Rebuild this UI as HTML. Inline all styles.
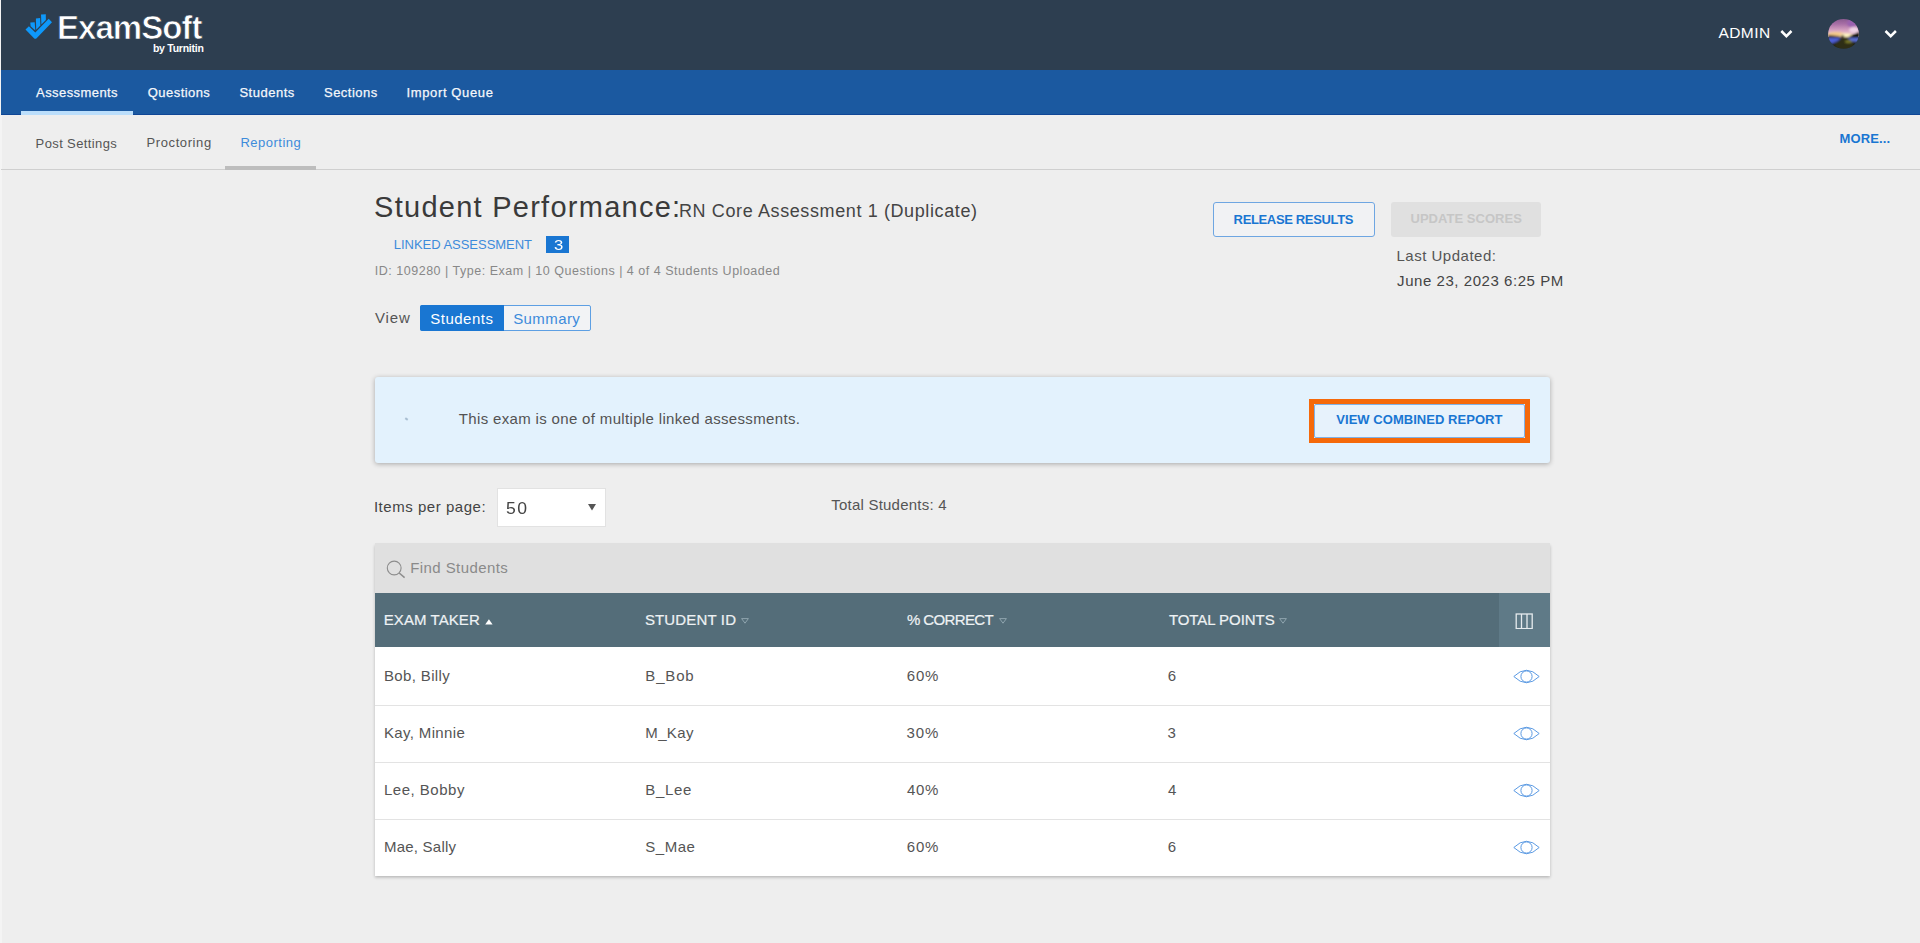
<!DOCTYPE html>
<html>
<head>
<meta charset="utf-8">
<title>Student Performance</title>
<style>
*{box-sizing:border-box;margin:0;padding:0}
html,body{width:1920px;height:943px;overflow:hidden;background:#eeeeee;font-family:"Liberation Sans",sans-serif;color:#444}
.abs{position:absolute;white-space:nowrap;line-height:1}
#top{position:absolute;left:1.4px;top:0;width:1919px;height:69.5px;background:#2d3e50}
#nav{position:absolute;left:1.4px;top:69px;width:1919px;height:46px;background:#1b59a0;border-bottom:1px solid #0f4696}
#navul{position:absolute;left:21px;top:111px;width:112px;height:4px;background:#bbdefb}
#subline{position:absolute;left:1.4px;top:169px;width:1919px;height:1px;background:#cfcfcf}
#repul{position:absolute;left:225px;top:166px;width:91px;height:4px;background:#bdbdbd}
.nv{color:#f4f7fb;font-size:13px;top:86px;-webkit-text-stroke:0.25px}
.sn{color:#555;font-size:13px;top:136px}
</style>
</head>
<body>
<div style="position:absolute;left:0;top:0;width:1.6px;height:943px;background:#f4f4f4"></div>
<div id="nav"></div>
<div id="top"></div>
<div id="navul"></div>
<div id="subline"></div>
<div id="repul"></div>

<!-- logo -->
<svg class="abs" style="left:24px;top:12px" width="30" height="28" viewBox="24 12 30 28">
 <path d="M25.5 29.6 L28.9 26.3 L35.3 32.4 L48.7 18.7 L52 22.2 L36.6 38.3 Q35.3 39.3 34 38.3 Z" fill="#0e98fa"/>
 <path d="M30.3 22.6 L34.7 22.2 L35.3 30.6 L30.6 26.3 Z" fill="#0e98fa"/>
 <path d="M35.9 18.5 L40.1 18.1 L40.4 25.6 L36.2 29.8 Z" fill="#0e98fa"/>
 <path d="M41 14.6 L45.8 14.2 L45.9 20 L41.4 24.5 Z" fill="#0e98fa"/>
</svg>
<div class="abs" id="lg1" style="left:56.9px;top:11px;font-size:33px;font-weight:bold;color:#fff;-webkit-text-stroke:0.7px #2d3e50;letter-spacing:-0.93px">ExamSoft</div>
<div class="abs" id="lg2" style="left:152.9px;top:42.6px;font-size:10.5px;font-weight:bold;color:#fff;letter-spacing:-0.25px">by Turnitin</div>

<!-- top right -->
<div class="abs" id="adm" style="left:1718.5px;top:25px;font-size:15.5px;color:#fff;letter-spacing:0.41px">ADMIN</div>
<svg class="abs" style="left:1779px;top:29px" width="15" height="11" viewBox="1779 29 15 11"><path d="M1781.3 31 L1786.4 36.2 L1791.5 31" fill="none" stroke="#fff" stroke-width="2.5"/></svg>
<svg class="abs" style="left:1883px;top:29px" width="15" height="11" viewBox="1883 29 15 11"><path d="M1885.5 31 L1890.7 36.2 L1895.9 31" fill="none" stroke="#fff" stroke-width="2.5"/></svg>
<svg class="abs" style="left:1826px;top:17px" width="36" height="34" viewBox="1826 17 36 34">
 <defs>
  <clipPath id="avc"><ellipse cx="1843.5" cy="33.9" rx="15.3" ry="14.9"/></clipPath>
  <linearGradient id="sky" x1="0" y1="0" x2="0" y2="1"><stop offset="0" stop-color="#7f5488"/><stop offset=".35" stop-color="#a86fa6"/><stop offset=".7" stop-color="#dba8c4"/><stop offset="1" stop-color="#f3d9c8"/></linearGradient>
  <filter id="bl" x="-20%" y="-20%" width="140%" height="140%"><feGaussianBlur stdDeviation="0.9"/></filter>
 </defs>
 <g clip-path="url(#avc)">
  <rect x="1826" y="17" width="36" height="20" fill="url(#sky)"/>
  <g filter="url(#bl)">
   <ellipse cx="1836" cy="35" rx="9" ry="3" fill="#f6c98a"/>
   <ellipse cx="1846" cy="35.5" rx="6" ry="2" fill="#fff3c0"/>
   <ellipse cx="1854" cy="30" rx="5" ry="3" fill="#f0d4e6"/>
   <ellipse cx="1852" cy="23" rx="5" ry="4" fill="#9a62b0"/>
   <rect x="1826" y="37" width="36" height="14" fill="#1c1b0c"/>
   <path d="M1828 37.3 L1841 37.3 L1838 41 L1832 43.5 L1828 42 Z" fill="#4d5fd6"/>
   <path d="M1847 37.5 L1860 37.5 L1860 42 L1852 41.5 Z" fill="#5a6fd8"/>
   <path d="M1842 38 L1846 38 L1855 44 L1850 49 L1838 49 L1833 44 Z" fill="#2e2e12"/>
   <ellipse cx="1848.5" cy="41.5" rx="3.5" ry="1.6" fill="#7a7a2a"/>
   <path d="M1828 35 L1840 36.3 L1840 37.6 L1828 37.6 Z" fill="#2a2418"/>
   <path d="M1849 36.6 L1859.5 31.5 L1860 37.8 L1849 37.8 Z" fill="#15140c"/>
   <rect x="1841" y="35.2" width="3" height="2.6" fill="#4a3a28"/>
  </g>
 </g>
</svg>

<!-- main nav -->
<div class="abs nv" id="n1" style="left:36.1px;letter-spacing:0.42px">Assessments</div>
<div class="abs nv" id="n2" style="left:147.8px;letter-spacing:0.44px">Questions</div>
<div class="abs nv" id="n3" style="left:239.4px;letter-spacing:0.52px">Students</div>
<div class="abs nv" id="n4" style="left:324.0px;letter-spacing:0.47px">Sections</div>
<div class="abs nv" id="n5" style="left:406.5px;letter-spacing:0.63px">Import Queue</div>

<!-- sub nav -->
<div class="abs sn" id="s1" style="left:35.6px;top:137px;letter-spacing:0.38px">Post Settings</div>
<div class="abs sn" id="s2" style="left:146.5px;top:136px;letter-spacing:0.60px">Proctoring</div>
<div class="abs sn" id="s3" style="left:240.4px;color:#3d8bdb;top:136px;letter-spacing:0.51px">Reporting</div>
<div class="abs" id="more" style="left:1839.6px;top:132px;font-size:13px;font-weight:bold;color:#1976d2;letter-spacing:0.10px">MORE...</div>

<!-- heading -->
<div class="abs" id="h1" style="left:374.1px;top:193px;font-size:29px;color:#3a3a3a;letter-spacing:1.26px">Student Performance:</div>
<div class="abs" id="h2" style="left:679.0px;top:202px;font-size:18px;color:#444;letter-spacing:0.61px">RN Core Assessment 1 (Duplicate)</div>
<div class="abs" id="la" style="left:393.8px;top:238px;font-size:13px;color:#3d8bdb;letter-spacing:-0.03px">LINKED ASSESSMENT</div>
<div class="abs" style="left:546px;top:236px;width:23px;height:17px;background:#1976d2"></div>
<div class="abs" id="b3" style="left:554.3px;top:237.5px;font-size:14.5px;color:#fff;transform:scaleX(1.15);transform-origin:left">3</div>
<div class="abs" id="idl" style="left:374.8px;top:265px;font-size:12.5px;color:#888;letter-spacing:0.51px">ID: 109280 | Type: Exam | 10 Questions | 4 of 4 Students Uploaded</div>

<!-- view toggle -->
<div class="abs" id="vw" style="left:374.9px;top:310px;font-size:15px;color:#555;letter-spacing:0.93px">View</div>
<div class="abs" style="left:420px;top:305px;width:171px;height:26px;border:1px solid #5d9fe3;border-radius:2px;background:#f2f3f5"></div>
<div class="abs" style="left:420px;top:305px;width:84px;height:26px;background:#1976d2;border-radius:2px 0 0 2px"></div>
<div class="abs" id="tg1" style="left:430.2px;top:311px;font-size:15px;color:#fff;letter-spacing:0.52px">Students</div>
<div class="abs" id="tg2" style="left:513.2px;top:311px;font-size:15px;color:#3d8bdb;letter-spacing:0.41px">Summary</div>

<!-- buttons right -->
<div class="abs" style="left:1213px;top:202px;width:162px;height:35px;border:1px solid #6ea6e2;border-radius:3px;background:#f1f2f4"></div>
<div class="abs" id="rr" style="left:1233.6px;top:213px;font-size:13px;font-weight:bold;color:#1976d2;letter-spacing:-0.35px">RELEASE RESULTS</div>
<div class="abs" style="left:1391px;top:202px;width:150px;height:35px;border-radius:3px;background:#e0e0e0"></div>
<div class="abs" id="us" style="left:1410.5px;top:212px;font-size:13px;font-weight:bold;color:#c6c6c6;letter-spacing:0.03px">UPDATE SCORES</div>
<div class="abs" id="lu1" style="left:1396.5px;top:248px;font-size:15px;color:#555;letter-spacing:0.50px">Last Updated:</div>
<div class="abs" id="lu2" style="left:1397.1px;top:273px;font-size:15px;color:#444;letter-spacing:0.55px">June 23, 2023 6:25 PM</div>

<!-- banner -->
<div class="abs" style="left:375px;top:376.5px;width:1174.5px;height:86px;background:#e3f2fd;border-radius:3px;box-shadow:0 1px 5px rgba(0,0,0,.3)"></div>
<div class="abs" style="left:405px;top:418px;width:3px;height:2px;background:#a9bfd2;transform:rotate(35deg)"></div>
<div class="abs" id="bt" style="left:458.8px;top:411px;font-size:15px;color:#535353;letter-spacing:0.34px">This exam is one of multiple linked assessments.</div>
<div class="abs" style="left:1309px;top:399px;width:221px;height:44px;border:5px solid #f5690a"></div>
<div class="abs" style="left:1314px;top:404px;width:211px;height:34px;border:1px solid #7fb1e6;border-radius:2px;background:#e7f2fc"></div>
<div class="abs" id="vcr" style="left:1336.3px;top:413px;font-size:13px;font-weight:bold;color:#1976d2;letter-spacing:0.04px">VIEW COMBINED REPORT</div>

<!-- items per page -->
<div class="abs" id="ipp" style="left:373.9px;top:499px;font-size:15px;color:#444;letter-spacing:0.54px">Items per page:</div>
<div class="abs" style="left:497px;top:488px;width:109px;height:39px;background:#fff;border:1px solid #e2e2e2"></div>
<div class="abs" id="fifty" style="left:505.5px;top:500.5px;font-size:16px;color:#444;transform:scaleX(1.1);transform-origin:left;letter-spacing:1.35px">50</div>
<svg class="abs" style="left:588px;top:504px" width="8" height="7" viewBox="0 0 8 7"><path d="M0 0 L8 0 L4 6.5 Z" fill="#555"/></svg>
<div class="abs" id="ts" style="left:831.2px;top:497px;font-size:15px;color:#555;letter-spacing:0.23px">Total Students: 4</div>

<!-- table -->
<div class="abs" style="left:375px;top:543.3px;width:1174.7px;height:333px;background:#fff;box-shadow:0 1.5px 3px rgba(0,0,0,.24)"></div>
<div class="abs" style="left:375px;top:543px;width:1175px;height:51px;background:#e0e0e0"></div>
<div class="abs" style="left:375px;top:593px;width:1175px;height:54px;background:#546d79"></div>
<div class="abs" style="left:1499px;top:593px;width:51px;height:54px;background:#5f7a87"></div>
<svg class="abs" style="left:386px;top:559px" width="20" height="20" viewBox="0 0 20 20"><circle cx="8.2" cy="9" r="6.9" fill="none" stroke="#8d8d8d" stroke-width="1.1"/><path d="M13.2 14 L18.6 18.6" stroke="#8d8d8d" stroke-width="1.5"/></svg>
<div class="abs" id="fs" style="left:410.3px;top:560px;font-size:15px;color:#8a8a8a;letter-spacing:0.41px">Find Students</div>

<div class="abs th" id="th1" style="left:383.8px;top:612px;font-size:15px;color:#eef2f4;-webkit-text-stroke:0.2px;letter-spacing:0.07px">EXAM TAKER</div>
<svg class="abs" style="left:484.6px;top:619px" width="8" height="6" viewBox="0 0 8 6"><path d="M0.2 5.6 L3.9 0.2 L7.6 5.6 Z" fill="#fff"/></svg>
<div class="abs th" id="th2" style="left:644.9px;top:612px;font-size:15px;color:#eef2f4;-webkit-text-stroke:0.2px;letter-spacing:0.15px">STUDENT ID</div>
<div class="abs th" id="th3" style="left:907.0px;top:612px;font-size:15px;color:#eef2f4;-webkit-text-stroke:0.2px;letter-spacing:-0.62px">% CORRECT</div>
<div class="abs th" id="th4" style="left:1168.9px;top:612px;font-size:15px;color:#eef2f4;-webkit-text-stroke:0.2px;letter-spacing:-0.06px">TOTAL POINTS</div>
<svg class="abs sorti" style="left:741px;top:618px" width="8" height="6" viewBox="0 0 8 6"><path d="M0.6 0.6 L7.4 0.6 L4 5.2 Z" fill="none" stroke="#8fa4ae" stroke-width="1"/></svg>
<svg class="abs sorti" style="left:999px;top:618px" width="8" height="6" viewBox="0 0 8 6"><path d="M0.6 0.6 L7.4 0.6 L4 5.2 Z" fill="none" stroke="#8fa4ae" stroke-width="1"/></svg>
<svg class="abs sorti" style="left:1279px;top:618px" width="8" height="6" viewBox="0 0 8 6"><path d="M0.6 0.6 L7.4 0.6 L4 5.2 Z" fill="none" stroke="#8fa4ae" stroke-width="1"/></svg>
<svg class="abs" style="left:1515px;top:613px" width="18" height="16" viewBox="0 0 18 16"><rect x="1.2" y="1" width="16" height="14.6" fill="none" stroke="#e6ebee" stroke-width="1.3"/><path d="M6.5 1 V15.6 M12 1 V15.6" stroke="#e6ebee" stroke-width="1.3"/></svg>

<div class="abs" style="left:375px;top:705px;width:1175px;height:1px;background:#e3e3e3"></div>
<div class="abs" style="left:375px;top:762px;width:1175px;height:1px;background:#e3e3e3"></div>
<div class="abs" style="left:375px;top:819px;width:1175px;height:1px;background:#e3e3e3"></div>

<div class="abs td" style="left:384.0px;top:668px;font-size:15px;color:#555;letter-spacing:0.35px" id="r1a">Bob, Billy</div>
<div class="abs td" style="left:645.3px;top:668px;font-size:15px;color:#555;letter-spacing:0.83px" id="r1b">B_Bob</div>
<div class="abs td" style="left:906.8px;top:668px;font-size:15px;color:#555;letter-spacing:0.75px" id="r1c">60%</div>
<div class="abs td" style="left:1167.8px;top:668px;font-size:15px;color:#555;letter-spacing:22.11px" id="r1d">6</div>

<div class="abs td" style="left:384.0px;top:725px;font-size:15px;color:#555;letter-spacing:0.35px" id="r2a">Kay, Minnie</div>
<div class="abs td" style="left:645.3px;top:725px;font-size:15px;color:#555;letter-spacing:0.35px" id="r2b">M_Kay</div>
<div class="abs td" style="left:906.6px;top:725px;font-size:15px;color:#555;letter-spacing:0.84px" id="r2c">30%</div>
<div class="abs td" style="left:1167.6px;top:725px;font-size:15px;color:#555;letter-spacing:22.56px" id="r2d">3</div>

<div class="abs td" style="left:384.0px;top:782px;font-size:15px;color:#555;letter-spacing:0.50px" id="r3a">Lee, Bobby</div>
<div class="abs td" style="left:645.3px;top:782px;font-size:15px;color:#555;letter-spacing:0.68px" id="r3b">B_Lee</div>
<div class="abs td" style="left:907.1px;top:782px;font-size:15px;color:#555;letter-spacing:0.61px" id="r3c">40%</div>
<div class="abs td" style="left:1168.1px;top:782px;font-size:15px;color:#555;letter-spacing:12.46px" id="r3d">4</div>

<div class="abs td" style="left:384.0px;top:839px;font-size:15px;color:#555;letter-spacing:0.22px" id="r4a">Mae, Sally</div>
<div class="abs td" style="left:645.2px;top:839px;font-size:15px;color:#555;letter-spacing:0.55px" id="r4b">S_Mae</div>
<div class="abs td" style="left:906.8px;top:839px;font-size:15px;color:#555;letter-spacing:0.75px" id="r4c">60%</div>
<div class="abs td" style="left:1167.8px;top:839px;font-size:15px;color:#555;letter-spacing:22.11px" id="r4d">6</div>

<svg class="abs eye" style="left:1513px;top:669px" width="27" height="15" viewBox="0 0 27 15"><path d="M0.8 7.5 Q13.5 -5 26.2 7.5 Q13.5 20 0.8 7.5 Z" fill="none" stroke="#5b9ae3" stroke-width="1"/><circle cx="13.5" cy="7.5" r="5.6" fill="none" stroke="#5b9ae3" stroke-width="1"/></svg>
<svg class="abs eye" style="left:1513px;top:726px" width="27" height="15" viewBox="0 0 27 15"><path d="M0.8 7.5 Q13.5 -5 26.2 7.5 Q13.5 20 0.8 7.5 Z" fill="none" stroke="#5b9ae3" stroke-width="1"/><circle cx="13.5" cy="7.5" r="5.6" fill="none" stroke="#5b9ae3" stroke-width="1"/></svg>
<svg class="abs eye" style="left:1513px;top:783px" width="27" height="15" viewBox="0 0 27 15"><path d="M0.8 7.5 Q13.5 -5 26.2 7.5 Q13.5 20 0.8 7.5 Z" fill="none" stroke="#5b9ae3" stroke-width="1"/><circle cx="13.5" cy="7.5" r="5.6" fill="none" stroke="#5b9ae3" stroke-width="1"/></svg>
<svg class="abs eye" style="left:1513px;top:840px" width="27" height="15" viewBox="0 0 27 15"><path d="M0.8 7.5 Q13.5 -5 26.2 7.5 Q13.5 20 0.8 7.5 Z" fill="none" stroke="#5b9ae3" stroke-width="1"/><circle cx="13.5" cy="7.5" r="5.6" fill="none" stroke="#5b9ae3" stroke-width="1"/></svg>
</body>
</html>
